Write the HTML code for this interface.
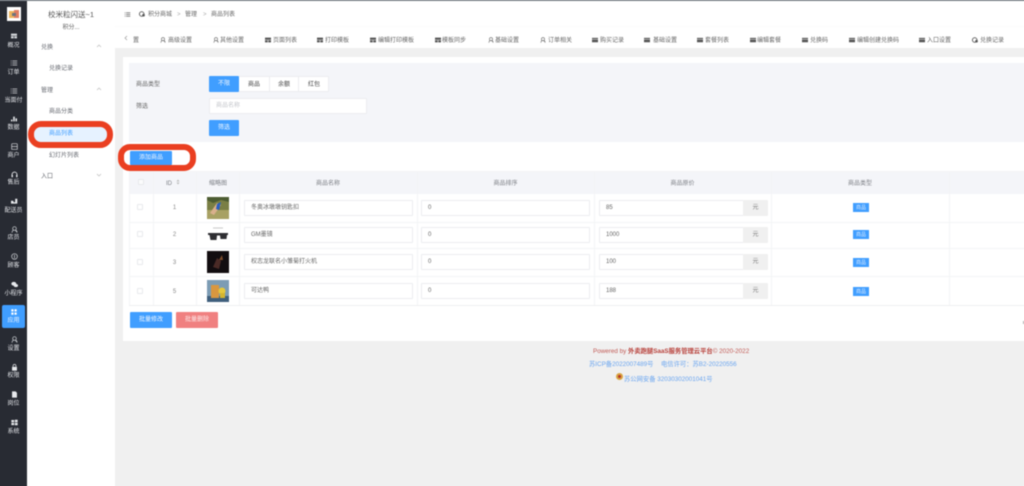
<!DOCTYPE html>
<html lang="zh-CN"><head><meta charset="utf-8"><title>商品列表</title>
<style>
html,body{margin:0;padding:0;width:1024px;height:486px;overflow:hidden;background:#f0f0f0;font-family:"Liberation Sans","Noto Sans CJK SC",sans-serif}
#p{position:relative;width:1024px;height:486px;filter:blur(.4px)}
#p div,#p svg{position:absolute;box-sizing:border-box}
.t{line-height:12px;height:12px;white-space:nowrap;font-size:6px;color:#666}
.c{text-align:center}
.n{color:#e2e4e8;width:27px;left:0;text-align:center;line-height:12px;height:12px;font-size:6px;white-space:nowrap}
.m{color:#666970}
.b{background:#fff;border:1px solid #ecedf0;border-radius:1px;font-size:6px;color:#666;line-height:15px;padding-left:6px;height:16px;white-space:nowrap}
.h{color:#7c7f85;font-size:6px;line-height:12px;height:12px;text-align:center;top:178px;white-space:nowrap}
.l{background:#f3f4f6}
.tag{left:853px;width:16px;height:9px;background:#409eff;color:#dcecff;font-size:5px;line-height:10px;text-align:center}
.add{left:743px;width:25px;height:16px;background:#f0f0f0;color:#777;font-size:6px;line-height:17px;text-align:center;border-radius:0 1px 1px 0}
.btn{color:#eef6ff;font-size:6px;text-align:center;border-radius:1px}
.cb{left:137px;width:6px;height:6px;border:1px solid #e8eaed;background:#fff;border-radius:1px}
</style></head><body><div id="p">
<svg width="0" height="0" style="left:0;top:0"><defs>
<symbol id="u" viewBox="0 0 10 10"><circle cx="5" cy="3.6" r="2.6" fill="none" stroke="currentColor" stroke-width="1"/><path d="M1.4 9.5 Q2 6 4 6 M8.6 9.5 Q8 6 6 6 M6.5 7.5 H9" fill="none" stroke="currentColor" stroke-width="1"/></symbol>
<symbol id="g" viewBox="0 0 10 10"><path d="M0 1H10V4.500H0ZM0 5.500H4.500V9H0ZM5.500 5.500H10V9H5.500Z" fill="currentColor"/></symbol>
<symbol id="w" viewBox="0 0 10 10"><path d="M0 1.500H10V3.600H0ZM0 4.400H10V8.800H0Z" fill="currentColor"/></symbol>
<symbol id="li" viewBox="0 0 10 10"><path d="M1 2H2V3H1ZM3 2H9V3H3ZM1 4.500H2V5.500H1ZM3 4.500H9V5.500H3ZM1 7H2V8H1ZM3 7H9V8H3Z" fill="currentColor"/></symbol>
<symbol id="o" viewBox="0 0 10 10"><circle cx="4.500" cy="5" r="3.800" fill="none" stroke="currentColor" stroke-width="1.500"/><circle cx="7.500" cy="7" r="2.200" fill="currentColor"/></symbol>
</defs></svg>

<div style="left:-6px;top:-6px;width:1040px;height:500px;background:#f0f0f0"></div>
<div style="left:-6px;top:-6px;width:33px;height:500px;background:#282b33"></div>
<div style="left:27px;top:-6px;width:88px;height:500px;background:#fff"></div>
<div style="left:115px;top:1px;width:915px;height:47px;background:#fff"></div>
<div style="left:115px;top:26px;width:915px;height:1px;background:#fbfbfb"></div>
<div style="left:-6px;top:-6px;width:1040px;height:7px;background:#80868c"></div>

<!-- logo -->
<div style="left:7px;top:7px;width:14px;height:14px;background:#fff"></div>
<div style="left:9px;top:11px;width:5px;height:7px;background:#eeb45c"></div>
<div style="left:14px;top:10px;width:5px;height:8px;background:#e07d63"></div>
<div style="left:12px;top:13px;width:4px;height:3px;background:#6d7480"></div>

<!-- left nav icons -->
<svg style="left:11px;top:33px;color:#d5d8dc" width="6" height="6"><use href="#g"/></svg>
<svg style="left:10px;top:59px;color:#d5d8dc" width="8" height="8"><use href="#li"/></svg>
<svg style="left:10px;top:87px;color:#d5d8dc" width="8" height="8"><use href="#li"/></svg>
<svg style="left:11px;top:116px;color:#e8eaed" width="6" height="6" viewBox="0 0 10 10"><path d="M0 9V6H2.500V9ZM3.700 9V1H6.300V9ZM7.500 9V4H10V9Z" fill="currentColor"/></svg>
<svg style="left:10.500px;top:143px;color:#d5d8dc" width="7" height="7" viewBox="0 0 10 10"><path d="M2 1H8Q9 1 9 2V9H1V2Q1 1 2 1ZM1 5H9" fill="none" stroke="currentColor"/></svg>
<svg style="left:10.500px;top:171px;color:#e8eaed" width="7" height="7" viewBox="0 0 10 10"><path d="M1.500 6V5A3.500 3.500 0 0 1 8.500 5V6" fill="none" stroke="currentColor" stroke-width="1.200"/><path d="M.7 5.500H2.700V9H.7ZM7.300 5.500H9.300V9H7.300Z" fill="currentColor"/></svg>
<svg style="left:10.500px;top:198px;color:#e8eaed" width="7" height="7" viewBox="0 0 10 10"><path d="M0 4H3L4 6H6V1H9V8H0Z" fill="currentColor"/></svg>
<svg style="left:10.500px;top:226px;color:#d5d8dc" width="7" height="7"><use href="#u"/></svg>
<svg style="left:10.500px;top:253px;color:#d5d8dc" width="7" height="7" viewBox="0 0 10 10"><circle cx="5" cy="5" r="4" fill="none" stroke="currentColor"/><path d="M5 2.500V7.500" stroke="currentColor"/></svg>
<svg style="left:10.500px;top:281px;color:#e8eaed" width="7" height="7" viewBox="0 0 10 10"><ellipse cx="4" cy="4" rx="3.500" ry="2.800" fill="currentColor"/><ellipse cx="7" cy="6.500" rx="3" ry="2.300" fill="currentColor"/></svg>
<div style="left:2px;top:305px;width:23px;height:23px;background:#409eff;border-radius:2px"></div>
<svg style="left:11px;top:309px;color:#fff" width="6" height="6" viewBox="0 0 10 10"><path d="M.5 .5H4.200V4.200H.5ZM5.800 .5H9.500V4.200H5.800ZM.5 5.800H4.200V9.500H.5ZM5.800 5.800H9.500V9.500H5.800Z" fill="currentColor"/></svg>
<svg style="left:10.500px;top:336px;color:#d5d8dc" width="7" height="7"><use href="#u"/></svg>
<svg style="left:10.500px;top:364px;color:#e8eaed" width="7" height="7" viewBox="0 0 10 10"><path d="M3 4V2.500A2 2 0 0 1 7 2.500V4" fill="none" stroke="currentColor"/><path d="M1.500 4H8.500V9.500H1.500Z" fill="currentColor"/></svg>
<svg style="left:10.500px;top:391px;color:#e8eaed" width="7" height="7" viewBox="0 0 10 10"><path d="M1.500 .5H6.500L8.500 2.500V9.500H1.500Z" fill="currentColor"/></svg>
<svg style="left:10.500px;top:419px;color:#e8eaed" width="7" height="7" viewBox="0 0 10 10"><path d="M.5 1.500H4.500V4.700H.5ZM5.500 1H9.500V4.700H5.500ZM.5 5.500H4.500V8.700H.5ZM5.500 5.500H9.500V9H5.500Z" fill="currentColor"/></svg>

<div class="n" style="top:40px">概况</div>
<div class="n" style="top:67px">订单</div>
<div class="n" style="top:95px">当面付</div>
<div class="n" style="top:122px">数据</div>
<div class="n" style="top:150px">商户</div>
<div class="n" style="top:177px">售后</div>
<div class="n" style="top:205px">配送员</div>
<div class="n" style="top:232px">店员</div>
<div class="n" style="top:260px">顾客</div>
<div class="n" style="top:288px">小程序</div>
<div class="n" style="top:315px;color:#eef6ff">应用</div>
<div class="n" style="top:343px">设置</div>
<div class="n" style="top:370px">权限</div>
<div class="n" style="top:398px">岗位</div>
<div class="n" style="top:426px">系统</div>

<!-- second sidebar -->
<div class="t c" style="left:28px;width:86px;top:9px;font-size:7.500px;color:#555">校米粒闪送~1</div>
<div class="t c" style="left:28px;width:86px;top:22px;color:#666">积分...</div>
<div class="t m" style="left:41px;top:42px">兑换</div>
<div class="t m" style="left:49px;top:63px">兑换记录</div>
<div class="t m" style="left:41px;top:85px">管理</div>
<div class="t m" style="left:49px;top:106px">商品分类</div>
<div style="left:34px;top:127px;width:73px;height:15px;background:#e6f2ff;border-radius:2px"></div>
<div class="t" style="left:49px;top:128px;color:#409eff">商品列表</div>
<div class="t m" style="left:49px;top:150px">幻灯片列表</div>
<div class="t m" style="left:41px;top:171px">入口</div>
<svg style="left:96px;top:44px" width="6" height="4"><path d="M1 3L3 1L5 3" fill="none" stroke="#bbb" stroke-width=".7"/></svg>
<svg style="left:96px;top:87px" width="6" height="4"><path d="M1 3L3 1L5 3" fill="none" stroke="#bbb" stroke-width=".7"/></svg>
<svg style="left:96px;top:173px" width="6" height="4"><path d="M1 1L3 3L5 1" fill="none" stroke="#bbb" stroke-width=".7"/></svg>
<div style="left:28px;top:121px;width:85px;height:27px;border:6px solid #ea3f21;border-radius:13px"></div>

<!-- header -->
<svg style="left:124px;top:11px;color:#666" width="7" height="7"><use href="#li"/></svg>
<svg style="left:139px;top:11px;color:#555" width="6" height="6"><use href="#o"/></svg>
<div class="t" style="left:148px;top:9px">积分商城</div>
<div class="t" style="left:177px;top:9px;color:#aaa">&gt;</div>
<div class="t" style="left:185px;top:9px">管理</div>
<div class="t" style="left:203px;top:9px;color:#aaa">&gt;</div>
<div class="t" style="left:211px;top:9px">商品列表</div>

<!-- tabs -->
<svg style="left:124px;top:35px" width="4" height="6"><path d="M3 1L1 3L3 5" fill="none" stroke="#999" stroke-width=".7"/></svg>
<div class="t" style="left:133px;top:35px">置</div>
<svg style="left:160px;top:37px;color:#666" width="6" height="6"><use href="#u"/></svg><div class="t" style="left:168px;top:35px">高级设置</div>
<svg style="left:213px;top:37px;color:#666" width="6" height="6"><use href="#u"/></svg><div class="t" style="left:220px;top:35px">其他设置</div>
<svg style="left:265px;top:37px;color:#555" width="6" height="6"><use href="#g"/></svg><div class="t" style="left:273px;top:35px">页面列表</div>
<svg style="left:317px;top:37px;color:#555" width="6" height="6"><use href="#g"/></svg><div class="t" style="left:325px;top:35px">打印模板</div>
<svg style="left:370px;top:37px;color:#555" width="6" height="6"><use href="#g"/></svg><div class="t" style="left:378px;top:35px">编辑打印模板</div>
<svg style="left:435px;top:37px;color:#555" width="6" height="6"><use href="#g"/></svg><div class="t" style="left:442px;top:35px">模板同步</div>
<svg style="left:488px;top:37px;color:#666" width="6" height="6"><use href="#u"/></svg><div class="t" style="left:495px;top:35px">基础设置</div>
<svg style="left:540px;top:37px;color:#666" width="6" height="6"><use href="#u"/></svg><div class="t" style="left:548px;top:35px">订单相关</div>
<svg style="left:592px;top:37px;color:#555" width="6" height="6"><use href="#w"/></svg><div class="t" style="left:600px;top:35px">购买记录</div>
<svg style="left:644px;top:37px;color:#555" width="6" height="6"><use href="#w"/></svg><div class="t" style="left:653px;top:35px">基础设置</div>
<svg style="left:697px;top:37px;color:#555" width="6" height="6"><use href="#w"/></svg><div class="t" style="left:705px;top:35px">套餐列表</div>
<svg style="left:750px;top:37px;color:#555" width="6" height="6"><use href="#w"/></svg><div class="t" style="left:757px;top:35px">编辑套餐</div>
<svg style="left:802px;top:37px;color:#555" width="6" height="6"><use href="#w"/></svg><div class="t" style="left:810px;top:35px">兑换码</div>
<svg style="left:849px;top:37px;color:#555" width="6" height="6"><use href="#w"/></svg><div class="t" style="left:857px;top:35px">编辑创建兑换码</div>
<svg style="left:919px;top:37px;color:#555" width="6" height="6"><use href="#w"/></svg><div class="t" style="left:927px;top:35px">入口设置</div>
<svg style="left:972px;top:37px;color:#555" width="6" height="6"><use href="#o"/></svg><div class="t" style="left:980px;top:35px">兑换记录</div>

<!-- card -->
<div style="left:123px;top:57px;width:907px;height:284px;background:#fff"></div>
<div style="left:129px;top:63px;width:901px;height:79px;background:#f4f5f9"></div>
<div class="t" style="left:136px;top:79px;color:#666">商品类型</div>
<div class="t" style="left:136px;top:101px;color:#666">筛选</div>
<div style="left:209px;top:76px;width:120px;height:16px;background:#fff;border:1px solid #ecedf0;border-radius:1px"></div>
<div class="btn" style="left:209px;top:76px;width:30px;height:16px;background:#409eff;line-height:17px">不限</div>
<div class="t c" style="left:239px;top:79px;width:30px;color:#444">商品</div>
<div class="t c" style="left:269px;top:79px;width:30px;color:#444">余额</div>
<div class="t c" style="left:299px;top:79px;width:30px;color:#444">红包</div>
<div style="left:269px;top:77px;width:1px;height:14px;background:#ecedf0"></div>
<div style="left:298px;top:77px;width:1px;height:14px;background:#ecedf0"></div>
<div class="b" style="left:209px;top:98px;width:158px;color:#c4c6cb">商品名称</div>
<div class="btn" style="left:209px;top:120px;width:30px;height:16px;background:#409eff;line-height:17px">筛选</div>

<!-- add button + red ring -->
<div class="btn" style="left:130px;top:151px;width:42px;height:14px;background:#409eff;line-height:15px">添加商品</div>
<div style="left:118px;top:144px;width:78px;height:27px;border:6px solid #ea3f21;border-radius:12px"></div>

<!-- table -->
<div style="left:129px;top:171px;width:901px;height:23px;background:#f4f5f9"></div>
<div class="l" style="left:129px;top:171px;width:901px;height:1px"></div>
<div class="l" style="left:129px;top:222px;width:901px;height:1px"></div>
<div class="l" style="left:129px;top:248px;width:901px;height:1px"></div>
<div class="l" style="left:129px;top:276px;width:901px;height:1px"></div>
<div class="l" style="left:129px;top:305px;width:901px;height:1px;background:#eeeff1"></div>
<div class="l" style="left:129px;top:171px;width:1px;height:134px"></div>
<div class="l" style="left:153px;top:171px;width:1px;height:134px"></div>
<div class="l" style="left:196px;top:171px;width:1px;height:134px"></div>
<div class="l" style="left:239px;top:171px;width:1px;height:134px"></div>
<div class="l" style="left:417px;top:171px;width:1px;height:134px"></div>
<div class="l" style="left:594px;top:171px;width:1px;height:134px"></div>
<div class="l" style="left:771px;top:171px;width:1px;height:134px"></div>
<div class="l" style="left:949px;top:171px;width:1px;height:134px"></div>

<div class="cb" style="left:138px;top:179px;background:#fbfbfc"></div>
<div class="h" style="left:153px;width:32px">ID</div>
<svg style="left:176px;top:179px" width="4" height="6"><path d="M2 .5L3.500 2.500H.5ZM2 5.500L.5 3.500H3.500Z" fill="#bbb"/></svg>
<div class="h" style="left:197px;width:42px">缩略图</div>
<div class="h" style="left:239px;width:178px">商品名称</div>
<div class="h" style="left:417px;width:177px">商品排序</div>
<div class="h" style="left:594px;width:177px">商品原价</div>
<div class="h" style="left:771px;width:178px">商品类型</div>

<!-- rows -->
<div class="cb" style="top:204px"></div><div class="cb" style="top:231px"></div><div class="cb" style="top:259px"></div><div class="cb" style="top:288px"></div>
<div class="t c" style="left:153px;width:43px;top:202px;color:#888">1</div>
<div class="t c" style="left:153px;width:43px;top:229px;color:#888">2</div>
<div class="t c" style="left:153px;width:43px;top:257px;color:#888">3</div>
<div class="t c" style="left:153px;width:43px;top:286px;color:#888">5</div>

<!-- thumbs -->
<svg style="left:207px;top:197px" width="22" height="22" viewBox="0 0 22 22"><rect width="22" height="22" fill="#7a7f45"/><rect y="13" width="22" height="9" fill="#a8a163"/><path d="M0 0H22V5L14 3L6 6L0 3Z" fill="#4c5c32"/><path d="M3 16L10 6L14 8L7 18Z" fill="#d9b08c"/><path d="M10 7L14 5L12 13L9 12Z" fill="#2a5fc0"/></svg>
<svg style="left:207px;top:226px" width="22" height="18" viewBox="0 0 22 18"><rect width="22" height="18" fill="#fff"/><path d="M6 2H16" stroke="#bbb" stroke-width=".8"/><path d="M1 7H21V9H20L19.500 13H13.500L13 9.500H10L9.500 14H3.500L2.500 9H1Z" fill="#2f2f33"/></svg>
<svg style="left:207px;top:251px" width="22" height="22" viewBox="0 0 22 22"><rect width="22" height="22" fill="#120d10"/><path d="M6 16L10 7L14 10L12 18Z" fill="#4a2a26"/><path d="M12 9L15 4L16 9Z" fill="#7d4c2c"/></svg>
<svg style="left:207px;top:280px" width="22" height="22" viewBox="0 0 22 22"><rect width="22" height="22" fill="#7c9cb4"/><rect y="16" width="22" height="6" fill="#3f5f7c"/><rect x="4" y="5" width="8" height="13" fill="#d9973f"/><circle cx="15" cy="11" r="3.500" fill="#e5c83c"/><rect x="13" y="13" width="5" height="5" fill="#d4b52f"/></svg>

<!-- inputs -->
<div class="b" style="left:244px;top:200px;width:169px">冬奥冰墩墩钥匙扣</div>
<div class="b" style="left:244px;top:227px;width:169px">GM墨镜</div>
<div class="b" style="left:244px;top:254px;width:169px">权志龙联名小雏菊打火机</div>
<div class="b" style="left:244px;top:283px;width:169px">可达鸭</div>
<div class="b" style="left:421px;top:200px;width:169px">0</div>
<div class="b" style="left:421px;top:227px;width:169px">0</div>
<div class="b" style="left:421px;top:254px;width:169px">0</div>
<div class="b" style="left:421px;top:283px;width:169px">0</div>
<div class="b" style="left:599px;top:200px;width:145px">85</div><div class="add" style="top:200px">元</div>
<div class="b" style="left:599px;top:227px;width:145px">1000</div><div class="add" style="top:227px">元</div>
<div class="b" style="left:599px;top:254px;width:145px">100</div><div class="add" style="top:254px">元</div>
<div class="b" style="left:599px;top:283px;width:145px">188</div><div class="add" style="top:283px">元</div>
<div class="tag" style="top:203px">商品</div>
<div class="tag" style="top:230px">商品</div>
<div class="tag" style="top:258px">商品</div>
<div class="tag" style="top:287px">商品</div>

<div class="btn" style="left:130px;top:312px;width:42px;height:16px;background:#409eff;line-height:17px">批量修改</div>
<div class="btn" style="left:176px;top:312px;width:42px;height:16px;background:#f08080;line-height:17px;color:#fde8e8">批量删除</div>
<div style="left:1023px;top:321px;width:1px;height:3px;background:#aaa"></div>

<!-- footer -->
<div class="t" style="left:593px;top:346px;font-size:6.300px;color:#c25b56">Powered by <b style="color:#b8403a">外卖跑腿SaaS服务管理云平台</b>© 2020-2022</div>
<div class="t" style="left:589px;top:359px;font-size:6.300px;color:#6aa5ef">苏ICP备2022007489号</div>
<div class="t" style="left:661px;top:359px;font-size:6.300px;color:#6aa5ef">电信许可：苏B2-20220556</div>
<div style="left:616px;top:373px;width:7px;height:7px;border-radius:50%;background:#d9a441"></div>
<div style="left:618px;top:375px;width:3px;height:3px;border-radius:50%;background:#b5342a"></div>
<div class="t" style="left:624px;top:374px;font-size:6.300px;color:#6aa5ef">苏公网安备 32030302001041号</div>
</div></body></html>
